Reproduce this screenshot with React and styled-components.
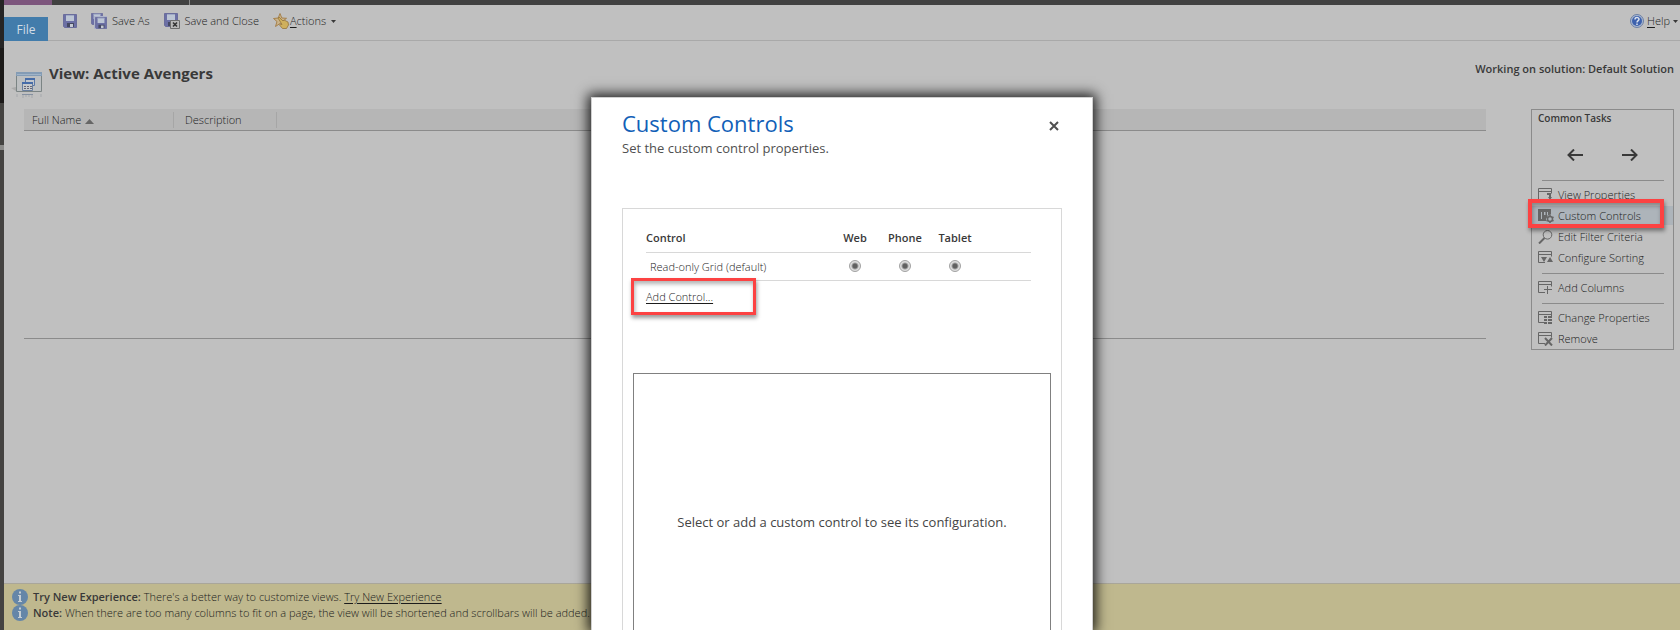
import React from "react";
import styled, { createGlobalStyle, css } from "styled-components";

const color = {
  page: "#c0c0c0",
  text: "#1c1c1c",
  strong: "#393939",
  line: "#8b8b8b",
  softLine: "#a9a9a9",
  icon: "#666",
  blue: "#1160b7",
  red: "#fc4242",
};

const GlobalStyle = createGlobalStyle`
  * { box-sizing: border-box; }
  body { margin: 0; background: ${color.page}; }
  body, button, input { font-family: "Open Sans", "Noto Sans", sans-serif; font-weight: 300; }
  b { font-weight: 600; color: ${color.strong}; }
`;

const Page = styled.div`
  display: flex;
  height: 100vh;
  overflow: hidden;
  background: ${color.page};
  color: ${color.text};
  font-size: 11px;
  line-height: 16px;
`;

const Rail = styled.div`
  display: flex;
  flex-direction: column;
  width: 4px;
  flex: none;
`;
const RailPart = styled.div`
  background: ${(p) => p.$tone};
  ${(p) => (p.$height ? `height: ${p.$height}px;` : "flex: 1;")}
`;

const Main = styled.div`
  position: relative;
  flex: 1;
  min-width: 0;
  display: flex;
  flex-direction: column;
`;

const NavStrip = styled.div`
  display: flex;
  height: 5px;
  flex: none;
  background: #414141;
`;
const NavAccent = styled.div`
  width: 48px;
  background: #7d567d;
`;
const NavDivider = styled.div`
  width: 1px;
  margin-left: 137px;
  background: #8b8b8b;
`;

const Toolbar = styled.header`
  display: flex;
  align-items: flex-end;
  height: 36px;
  flex: none;
  border-bottom: 1px solid ${color.softLine};
`;
const plainButton = css`
  border: 0;
  padding: 0;
  background: none;
  color: inherit;
  font-size: 11px;
  line-height: 16px;
  cursor: pointer;
`;
const FileTab = styled.button`
  ${plainButton}
  width: 44px;
  height: 24px;
  padding-top: 2px;
  margin-bottom: -1px;
  background: #427cab;
  color: #d2dde6;
  font-size: 12px;
  font-weight: 400;
`;
const Tools = styled.div`
  display: flex;
  align-items: center;
  flex: 1;
  height: 32px;
  gap: 14px;
  padding: 0 2px 0 15px;
  align-self: flex-start;
`;
const ToolButton = styled.button`
  ${plainButton}
  display: flex;
  align-items: center;
  gap: ${(p) => p.$gap ?? 5}px;
  margin-left: ${(p) => (p.$end ? "auto" : 0)};
  u { text-underline-offset: 2px; }
`;

const TitleRow = styled.div`
  display: flex;
  justify-content: space-between;
  height: 68px;
  flex: none;
  padding: 20px 6px 0 7px;
  color: ${color.strong};
`;
const TitleGroup = styled.div`
  display: flex;
  gap: 5px;
  svg { margin-top: 9px; }
`;
const Title = styled.h1`
  margin: 0;
  font-size: 15px;
  line-height: 25px;
  font-weight: 700;
`;
const Solution = styled.div`
  font-weight: 600;
  font-size: 11px;
  line-height: 16px;
`;

const Content = styled.div`
  display: flex;
  align-items: flex-start;
  flex: 1;
  gap: 45px;
  padding: 0 6px 0 20px;
`;
const ColumnsTable = styled.table`
  flex: 1;
  height: 230px;
  border-collapse: collapse;
  border-bottom: 1px solid ${color.line};
  display: block;
`;
const ColumnsHead = styled.thead`
  display: block;
  background: #b6b6b6;
  border-bottom: 1px solid ${color.line};
  tr { display: flex; height: 21px; align-items: center; }
`;
const ColumnHeader = styled.th`
  width: ${(p) => p.$width}px;
  height: 16px;
  padding: 0 0 0 ${(p) => p.$inset}px;
  border-right: 1px solid #a6a6a6;
  font-weight: 300;
  text-align: left;
  line-height: 16px;
  svg { margin-left: 4px; }
`;

const TaskPanel = styled.aside`
  width: 143px;
  flex: none;
  border: 1px solid ${color.line};
`;
const TaskTitle = styled.h2`
  margin: 0;
  padding: 0 6px;
  font-size: 10px;
  line-height: 16px;
  font-weight: 600;
  color: ${color.strong};
`;
const Arrows = styled.div`
  display: flex;
  justify-content: center;
  gap: 39px;
  height: 49px;
  align-items: center;
  padding-top: 8px;
`;
const ArrowButton = styled.button`
  ${plainButton}
  display: flex;
`;
const TaskRule = styled.hr`
  height: 1px;
  margin: 5px 9px 3px 10px;
  border: 0;
  background: ${color.line};
`;
const TaskItem = styled.div`
  position: relative;
  height: 21px;
  padding: 1px 0;
`;
const TaskButton = styled.button`
  ${plainButton}
  display: flex;
  align-items: center;
  gap: 4px;
  width: 100%;
  height: 19px;
  padding-left: 6px;
  background: ${(p) => (p.$active ? "#adb4ba" : "none")};
`;
const Highlight = styled.span`
  position: absolute;
  pointer-events: none;
  border: ${(p) => p.$stroke}px solid ${color.red};
  box-shadow: 1px 3px 4px rgba(0, 0, 0, 0.4), inset 1px 3px 4px rgba(0, 0, 0, 0.3);
`;
const TaskHighlight = styled(Highlight)`
  z-index: 1;
  inset: -6px 9px -2px -4px;
`;
const LinkHighlight = styled(Highlight)`
  inset: -11px -43px -10px -15px;
`;

const Notices = styled.footer`
  flex: none;
  height: 47px;
  padding: 5px 8px;
  border-top: 1px solid #a9a69a;
  background: #bfb88e;
`;
const Notice = styled.p`
  display: flex;
  align-items: center;
  gap: 5px;
  margin: 0;
  height: 16px;
  white-space: nowrap;
`;
const TextLink = styled.a`
  color: inherit;
  text-decoration: underline;
  text-underline-offset: 2px;
`;

const Dialog = styled.section`
  position: absolute;
  top: 97px;
  bottom: 0;
  left: 50%;
  width: 502px;
  margin-left: -251px;
  padding: 10px 30px 0;
  border: 1px solid #d0d0d0;
  border-bottom: 0;
  background: #fff;
  box-shadow: 0 0 12px 3px rgba(0, 0, 0, 0.85);
  overflow: hidden;
`;
const DialogHeader = styled.div`
  display: flex;
  justify-content: space-between;
  align-items: flex-start;
  height: 100px;
`;
const DialogTitle = styled.h2`
  margin: 0;
  font-size: 22px;
  line-height: 30px;
  font-weight: 400;
  color: ${color.blue};
`;
const DialogHint = styled.p`
  margin: 0;
  font-size: 13px;
  line-height: 20px;
  font-weight: 400;
  color: #505050;
`;
const CloseButton = styled.button`
  ${plainButton}
  display: flex;
  padding: 13px 3px;
`;
const ControlsPanel = styled.div`
  height: 520px;
  padding: 17px 10px 0;
  border: 1px solid #d8d8d8;
`;
const ControlsArea = styled.div`
  height: 147px;
  padding: 0 20px 0 13px;
`;
const ControlsTable = styled.table`
  width: 100%;
  border-collapse: collapse;
  table-layout: fixed;
  tr { border-bottom: 1px solid #d8d8d8; }
  th, td { padding: 0; text-align: center; }
  th:first-child, td:first-child { text-align: left; }
  th { height: 26px; padding-bottom: 2px; font-weight: 600; color: ${color.strong}; }
  td { height: 28px; }
  td:first-child { padding: 2px 0 0 4px; }
`;
const Radio = styled.input`
  appearance: none;
  display: block;
  width: 12px;
  height: 12px;
  margin: 0 auto;
  border: 1px solid #a2a2a2;
  border-radius: 50%;
  background: radial-gradient(circle, #606060 0 2px, #dedede 4px);
`;
const AddLine = styled.div`
  padding-top: 8px;
`;
const AddWrap = styled.span`
  position: relative;
  display: inline-block;
`;
const Preview = styled.div`
  display: flex;
  align-items: center;
  justify-content: center;
  height: 298px;
  border: 1px solid #808080;
  font-size: 13px;
  font-weight: 400;
  color: #444;
`;

const Disk = ({ x = 0, y = 0, s = 14 }) => (
  <svg x={x} y={y} width={s} height={s} viewBox="0 0 14 14">
    <path d="M.5.5h13v13h-12l-1-1z" fill="#6c70a5" stroke="#6a6d9c" />
    <path d="M3 1h8v6H3z" fill="#bcc5d4" />
    <path d="M3 1h8v1H3z" fill="#9fa9c4" />
    <path d="M4 9h7v4H4z" fill="#454963" />
    <path d="M7 10h3v3H7z" fill="#c4c9d3" />
  </svg>
);
const SaveIcon = () => (
  <svg width="14" height="14" aria-hidden="true"><Disk /></svg>
);
const SaveAsIcon = () => (
  <svg width="16" height="16" aria-hidden="true">
    <Disk s={12} />
    <path d="M3 3h13v13H3z" fill="#aeb4cc" />
    <Disk x={4} y={4} s={12} />
  </svg>
);
const SaveCloseIcon = () => (
  <svg width="16" height="16" aria-hidden="true">
    <Disk />
    <path d="M6.500 7.500h9v8h-9z" fill="#b9b9b9" stroke="#6d6d6d" />
    <path d="M9 9.500l4 4m0-4l-4 4" stroke="#333" strokeWidth="1.600" />
  </svg>
);
const ActionsIcon = () => (
  <svg width="16" height="16" aria-hidden="true">
    <path d="M7 .5l1.800 4.500 4.700.3-3.700 3 1.200 4.700-4-2.500-4.500 3L4 8.500.5 5.500 5.200 5z" fill="#cbb48a" stroke="#a5804c" />
    <path d="M5 5l1-1 4 4 1-1 4 2 .5 3-2 3.500H9.500L6.500 12l1-1 1.500.5z" fill="#cfb05c" stroke="#94733b" strokeWidth=".8" />
  </svg>
);
const HelpIcon = () => (
  <svg width="14" height="14" viewBox="0 0 14 14" aria-hidden="true">
    <circle cx="7" cy="7" r="6.500" fill="#a9b8d0" stroke="#6c7fa5" />
    <circle cx="7" cy="7" r="5" fill="#3d61ad" />
    <path d="M5 5.500C5 3 9 3 9 5.300 9 6.700 7 6.600 7 8.500M7 9.500v1.500" fill="none" stroke="#dbe2ee" strokeWidth="1.500" />
  </svg>
);
const Caret = () => (
  <svg width="5" height="3" aria-hidden="true"><path d="M0 0h5L2.500 3z" fill="#393939" /></svg>
);
const SortUp = () => (
  <svg width="9" height="5" aria-hidden="true"><path d="M0 5h9L4.500 0z" fill="#666" /></svg>
);
const ViewIcon = () => (
  <svg width="33" height="28" viewBox="0 0 33 28" aria-hidden="true">
    <path d="M0 18l5-1v4z" fill="#aaa" />
    <path d="M5.500 2.500h25v19h-25z" fill="#bcbfc1" stroke="#7b8484" />
    <path d="M5 2h26v4H5z" fill="#849cb5" />
    <path d="M6 4h24v1H6z" fill="#a0b4c8" />
    <path d="M14.500 8.500h9v7h-9z" fill="#c0c5cc" stroke="#5a78a8" />
    <path d="M14 8h10v2H14z" fill="#466ca8" />
    <path d="M11.500 12.500h10v8h-10z" fill="#c6c9cc" stroke="#6a7f9e" />
    <path d="M11 12h11v2H11z" fill="#466ca8" />
    <path d="M13 16h2v1h-2zm3 0h2v1h-2zm3 0h2v1h-2zm-6 2h2v1h-2zm3 0h2v1h-2zm3 0h2v1h-2z" fill="#667" />
    <path d="M11 24h11v1H11z" fill="#8590a0" />
    <path d="M12 25v3m3-3v2m3-2v2m3-2v3M6 24v3m24-3v3" stroke="#a5a8ac" />
  </svg>
);
const InfoIcon = () => (
  <svg width="16" height="16" aria-hidden="true">
    <circle cx="8" cy="8" r="8" fill="#6586a8" />
    <path d="M7 2.500h2v2H7zM6 6h3v6h1v1H6v-1h1V7H6z" fill="#c5cdd3" />
  </svg>
);
const Arrow = ({ back }) => (
  <svg width="16" height="12" fill="none" stroke="#393939" strokeWidth="2" aria-hidden="true">
    <path d={back ? "M16 6H1M7 .5L1.500 6 7 11.500" : "M0 6h15M9 .5L14.500 6 9 11.500"} />
  </svg>
);
const CloseIcon = () => (
  <svg width="10" height="10" aria-hidden="true">
    <path d="M1 1l8 8m0-8L1 9" stroke="#505050" strokeWidth="2" />
  </svg>
);

const frame = "M7 11.500H.5V.5h13v5M0 3.500h14";
const TaskIcon = ({ kind }) => (
  <svg width="16" height="14" fill="none" stroke={color.icon} aria-hidden="true">
    {["view", "sort", "add", "change", "remove"].includes(kind) && <path d={frame} />}
    {kind === "view" && <path d="M9 5h4v4h1l-2 3-2-3h1V7H9z" fill={color.icon} stroke="none" />}
    {kind === "custom" && (
      <>
        <path d="M0 0h13v5.500L11 6l-2 2-1 2v2H0zM3 3v7h1V3zm3 0v3h1.500V3zm3 0v4l1-1V3z" fill={color.icon} fillRule="evenodd" stroke="none" />
        <circle cx="12" cy="10" r="2.500" strokeWidth="1.500" />
        <path d="M12 6v1.500m0 5V14M8.500 8l1.300.8m4.400 2.400l1.300.8M8.500 12l1.300-.8m4.400-2.400L15.500 8" strokeWidth="1.500" />
      </>
    )}
    {kind === "filter" && (
      <>
        <circle cx="9.500" cy="4.800" r="4.300" />
        <path d="M6.500 8L1 13.500" strokeWidth="2" />
      </>
    )}
    {kind === "sort" && <path d="M3 6h6l-3 5zM9 11h6l-3-5z" fill={color.icon} stroke="none" />}
    {kind === "add" && <path d="M6 8.500h8M9.500 5v8" />}
    {kind === "change" && <path d="M6 6h3m1 0h4M6 9h3m1 0h4M6 12h3m1 0h4" strokeWidth="2" />}
    {kind === "remove" && <path d="M7 6l7 7.500m0-7.500L7 13.500" strokeWidth="2" />}
  </svg>
);

const taskGroups = [
  [["view", "View Properties"], ["custom", "Custom Controls"], ["filter", "Edit Filter Criteria"], ["sort", "Configure Sorting"]],
  [["add", "Add Columns"]],
  [["change", "Change Properties"], ["remove", "Remove"]],
];
const devices = ["Web", "Phone", "Tablet"];

export default function App() {
  return (
    <Page>
      <GlobalStyle />
      <Rail>
        <RailPart $height={48} $tone="#262525" />
        <RailPart $height={55} $tone="#1c1a19" />
        <RailPart $height={42} $tone="#444341" />
        <RailPart $height={5} $tone="#8b8b89" />
        <RailPart $tone="#444341" />
      </Rail>
      <Main>
        <NavStrip><NavAccent /><NavDivider /></NavStrip>
        <Toolbar>
          <FileTab>File</FileTab>
          <Tools>
            <ToolButton aria-label="Save"><SaveIcon /></ToolButton>
            <ToolButton><SaveAsIcon />Save As</ToolButton>
            <ToolButton><SaveCloseIcon />Save and Close</ToolButton>
            <ToolButton $gap={1}><ActionsIcon /><span><u>A</u>ctions</span>&nbsp;<Caret /></ToolButton>
            <ToolButton $end $gap={3}><HelpIcon /><span><u>H</u>elp</span><Caret /></ToolButton>
          </Tools>
        </Toolbar>
        <TitleRow>
          <TitleGroup>
            <ViewIcon />
            <Title>View: Active Avengers</Title>
          </TitleGroup>
          <Solution>Working on solution: Default Solution</Solution>
        </TitleRow>
        <Content>
          <ColumnsTable>
            <ColumnsHead>
              <tr>
                <ColumnHeader $width={150} $inset={8}>Full Name<SortUp /></ColumnHeader>
                <ColumnHeader $width={103} $inset={11}>Description</ColumnHeader>
              </tr>
            </ColumnsHead>
          </ColumnsTable>
          <TaskPanel>
            <TaskTitle>Common Tasks</TaskTitle>
            <Arrows>
              <ArrowButton aria-label="Move left"><Arrow back /></ArrowButton>
              <ArrowButton aria-label="Move right"><Arrow /></ArrowButton>
            </Arrows>
            {taskGroups.map((group, i) => (
              <React.Fragment key={i}>
                <TaskRule />
                {group.map(([kind, label]) => (
                  <TaskItem key={kind}>
                    <TaskButton $active={kind === "custom"}><TaskIcon kind={kind} />{label}</TaskButton>
                    {kind === "custom" && <TaskHighlight $stroke={4} />}
                  </TaskItem>
                ))}
              </React.Fragment>
            ))}
          </TaskPanel>
        </Content>
        <Notices>
          <Notice><InfoIcon /><span><b>Try New Experience:</b> There's a better way to customize views. <TextLink href="#new">Try New Experience</TextLink></span></Notice>
          <Notice><InfoIcon /><span><b>Note:</b> When there are too many columns to fit on a page, the view will be shortened and scrollbars will be added.</span></Notice>
        </Notices>
        <Dialog role="dialog" aria-labelledby="dialog-title">
          <DialogHeader>
            <div>
              <DialogTitle id="dialog-title">Custom Controls</DialogTitle>
              <DialogHint>Set the custom control properties.</DialogHint>
            </div>
            <CloseButton aria-label="Close"><CloseIcon /></CloseButton>
          </DialogHeader>
          <ControlsPanel>
            <ControlsArea>
              <ControlsTable>
                <colgroup>
                  <col /><col width="50" /><col width="50" /><col width="50" /><col width="51" />
                </colgroup>
                <thead>
                  <tr><th>Control</th>{devices.map((d) => <th key={d}>{d}</th>)}<th /></tr>
                </thead>
                <tbody>
                  <tr>
                    <td>Read-only Grid (default)</td>
                    {devices.map((d) => (
                      <td key={d}><Radio type="radio" name={d} defaultChecked aria-label={`Read-only Grid on ${d}`} /></td>
                    ))}
                    <td />
                  </tr>
                </tbody>
              </ControlsTable>
              <AddLine>
                <AddWrap>
                  <TextLink href="#add">Add Control...</TextLink>
                  <LinkHighlight $stroke={3} />
                </AddWrap>
              </AddLine>
            </ControlsArea>
            <Preview>Select or add a custom control to see its configuration.</Preview>
          </ControlsPanel>
        </Dialog>
      </Main>
    </Page>
  );
}
